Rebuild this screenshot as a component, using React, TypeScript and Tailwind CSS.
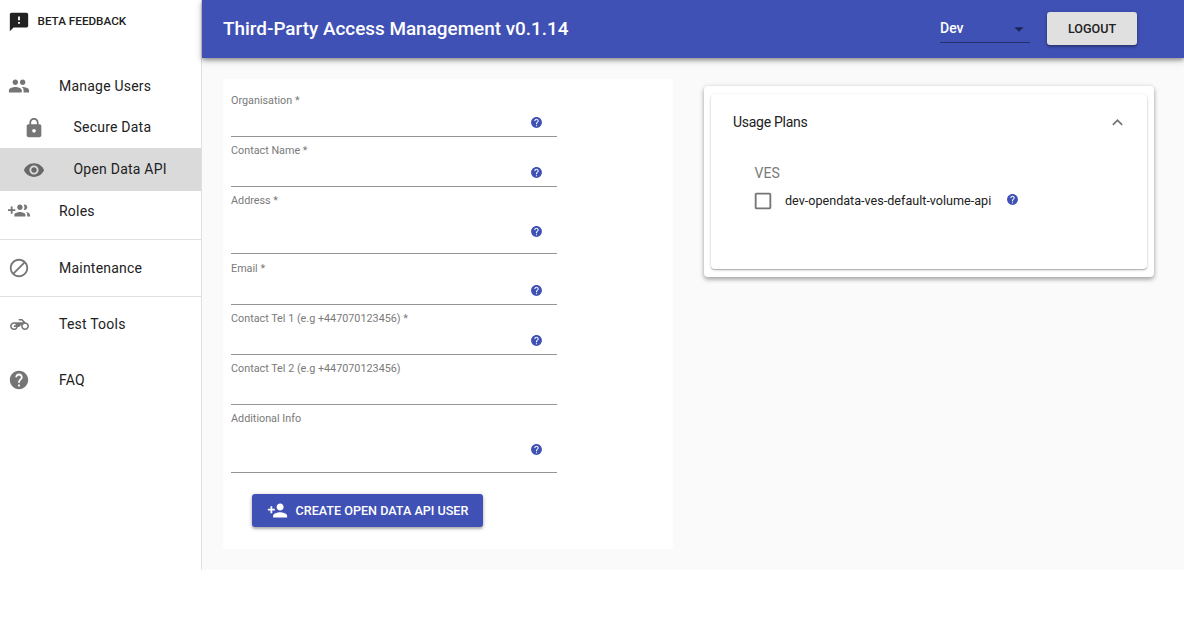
import type { ReactNode } from 'react';
import {
  MdArrowDropDown,
  MdCheckBoxOutlineBlank,
  MdExpandLess,
  MdHelp,
  MdLock,
  MdPeople,
  MdSmsFailed,
  MdVisibility,
} from 'react-icons/md';

function Svg({ d, className }: { d: string; className: string }) {
  return (
    <svg viewBox="0 0 24 24" fill="currentColor" className={className}>
      <path d={d} />
    </svg>
  );
}

const GROUP_ADD =
  'M8 10H5V7H3v3H0v2h3v3h2v-3h3v-2zm10 1c1.66 0 2.99-1.34 2.99-3S19.66 5 18 5c-.32 0-.63.05-.91.14.57.81.9 1.79.9 2.86s-.34 2.04-.9 2.86c.28.09.59.14.91.14zm-5 0c1.66 0 2.99-1.34 2.99-3S14.66 5 13 5c-1.66 0-3 1.34-3 3s1.34 3 3 3zm6.62 2.16c.83.73 1.38 1.66 1.38 2.84v2h3v-2c0-1.54-2.37-2.49-4.38-2.84zM13 13c-2 0-6 1-6 3v2h12v-2c0-2-4-3-6-3z';
const DO_NOT_DISTURB =
  'M12 2C6.5 2 2 6.5 2 12s4.5 10 10 10 10-4.5 10-10S17.5 2 12 2zM4 12c0-4.4 3.6-8 8-8 1.8 0 3.5.6 4.9 1.7L5.7 16.9C4.6 15.5 4 13.8 4 12zm8 8c-1.8 0-3.5-.6-4.9-1.7L18.3 7.1C19.4 8.5 20 10.2 20 12c0 4.4-3.6 8-8 8z';
const MOTORCYCLE =
  'M19.44 9.03L15.41 5H11v2h3.59l2 2H5c-2.8 0-5 2.2-5 5s2.2 5 5 5c2.46 0 4.45-1.69 4.9-4h1.65l2.77-2.77c-.21.54-.32 1.14-.32 1.77 0 2.8 2.2 5 5 5s5-2.2 5-5c0-2.65-1.97-4.77-4.56-4.97zM7.82 15C7.4 16.15 6.28 17 5 17c-1.63 0-3-1.37-3-3s1.37-3 3-3c1.28 0 2.4.85 2.82 2H5v2h2.82zM19 17c-1.66 0-3-1.34-3-3s1.34-3 3-3 3 1.34 3 3-1.34 3-3 3z';
const PERSON_ADD =
  'M15 12c2.21 0 4-1.79 4-4s-1.79-4-4-4-4 1.79-4 4 1.79 4 4 4zm-9-2V7H4v3H1v2h3v3h2v-3h3v-2H6zm9 4c-2.67 0-8 1.34-8 4v2h16v-2c0-2.66-5.33-4-8-4z';

function NavItem({ icon, label, nested, selected }: { icon: ReactNode; label: string; nested?: boolean; selected?: boolean }) {
  return (
    <a
      className={`flex shrink-0 items-center text-[14px] tracking-[0.22px] text-[#212121] ${nested ? 'pl-[22.5px]' : 'pl-2'} ${selected ? 'h-[43px] bg-[#dadada]' : 'h-[42px]'}`}
    >
      <span className="flex w-[51px] items-center text-[#757575]">{icon}</span>
      {label}
    </a>
  );
}

function Sidebar() {
  return (
    <nav className="flex h-[570px] w-[202px] shrink-0 flex-col border-r border-[#e0e0e0] bg-white">
      <div className="mb-[22px] flex h-[43px] items-center gap-[7.5px] pl-2 text-[11.7px] font-medium text-[#212121]">
        <MdSmsFailed className="size-[22px]" />
        <span className="pt-px">BETA FEEDBACK</span>
      </div>
      <NavItem icon={<MdPeople className="size-[22px]" />} label="Manage Users" />
      <div className="-mt-px flex flex-col">
        <NavItem nested icon={<MdLock className="mt-px size-[22px]" />} label="Secure Data" />
        <NavItem nested selected icon={<MdVisibility className="size-[22px] text-[#686868]" />} label="Open Data API" />
      </div>
      <div className="-mt-px">
        <NavItem icon={<Svg d={GROUP_ADD} className="size-[22px]" />} label="Roles" />
      </div>
      <div className="my-[7px] h-px shrink-0 bg-[#e0e0e0]" />
      <NavItem icon={<Svg d={DO_NOT_DISTURB} className="size-[22px]" />} label="Maintenance" />
      <div className="mt-[7px] mb-[6px] h-px shrink-0 bg-[#e0e0e0]" />
      <NavItem icon={<Svg d={MOTORCYCLE} className="ml-[1.5px] size-[19px]" />} label="Test Tools" />
      <div className="h-[14px] shrink-0" />
      <NavItem icon={<MdHelp className="size-[22px]" />} label="FAQ" />
    </nav>
  );
}

function Field({ label, height, help }: { label: string; height: string; help?: string }) {
  return (
    <div className={`flex w-[326px] justify-between border-b border-[#949494] ${height}`}>
      <label className="pt-[7px] text-[10.8px] leading-[14px] text-[#7a7a7a]">{label}</label>
      {help && <MdHelp className={`mr-[14px] size-[13px] text-[#3f51b5] ${help}`} />}
    </div>
  );
}

function UserForm() {
  return (
    <form className="h-[470px] w-[450px] rounded-[3px] bg-white pt-2 pl-2">
      <Field label="Organisation *" height="h-[50px]" help="mt-[29px]" />
      <Field label="Contact Name *" height="h-[50px]" help="mt-[29px]" />
      <Field label="Address *" height="h-[67px]" help="mt-[37.5px]" />
      <div className="flex h-[51px] flex-col justify-end">
        <Field label="Email *" height="h-[50px]" help="mt-[29px]" />
      </div>
      <Field label="Contact Tel 1 (e.g +447070123456) *" height="h-[50px]" help="mt-[29px]" />
      <Field label="Contact Tel 2 (e.g +447070123456)" height="h-[50px]" />
      <Field label="Additional Info" height="h-[68px]" help="mt-[37.5px]" />
      <button
        type="button"
        className="mt-[21px] ml-[21px] flex h-[33px] w-[231px] items-center gap-[7.5px] rounded-[3px] bg-[#3f51b5] pl-[15px] text-[12.6px] font-medium text-white shadow-[0_1px_4px_rgba(0,0,0,0.25),0_2px_2px_rgba(0,0,0,0.18)]"
      >
        <Svg d={PERSON_ADD} className="size-[21px]" />
        <span className="pt-px">CREATE OPEN DATA API USER</span>
      </button>
    </form>
  );
}

function UsagePlans() {
  return (
    <section className="mt-[7px] h-[191px] w-[450px] rounded-[4px] bg-white p-[7px] pt-2 shadow-[0_1px_5px_rgba(0,0,0,0.22),0_3px_4px_rgba(0,0,0,0.2)]">
      <div className="h-[175px] w-[436px] rounded-[4px] bg-white pl-[22px] shadow-[0_1px_3px_rgba(0,0,0,0.2),0_1px_1px_rgba(0,0,0,0.2)]">
        <div className="flex h-14 items-center justify-between pr-[19px] text-[14px] tracking-[-0.27px] text-[#212121]">
          Usage Plans
          <MdExpandLess className="size-[21px] text-[#757575]" />
        </div>
        <div className="pt-[14px] pl-[21.5px]">
          <div className="text-[14px] leading-[18px] tracking-[0.1px] text-[#7a7a7a]">VES</div>
          <div className="mt-2 flex h-[22px] items-center text-[12.6px] text-[#212121]">
            <MdCheckBoxOutlineBlank className="-ml-[2.5px] size-[22px] text-[#757575]" />
            <span className="ml-[11px]">dev-opendata-ves-default-volume-api</span>
            <MdHelp className="mb-[3px] ml-[15px] size-[13px] text-[#3f51b5]" />
          </div>
        </div>
      </div>
    </section>
  );
}

export default function App() {
  return (
    <div className="flex h-[643px] w-[1184px] overflow-hidden bg-white font-['Roboto',sans-serif]">
      <Sidebar />
      <div className="flex h-[570px] flex-1 flex-col bg-[#fafafa]">
        <header className="flex h-[58px] shrink-0 items-center bg-[#3f51b5] pr-[47px] pb-px pl-[21px] shadow-[0_2px_4px_rgba(0,0,0,0.35),0_3px_8px_rgba(0,0,0,0.15)]">
          <h1 className="flex-1 pt-[2px] text-[18.9px] font-medium text-white">Third-Party Access Management v0.1.14</h1>
          <div className="mr-[17px] flex h-[29px] w-[90px] items-center justify-between border-b border-[#252f69] text-[14px] font-medium text-white">
            Dev
            <MdArrowDropDown className="mt-px size-[22px] text-[#1d2554]" />
          </div>
          <button
            type="button"
            className="h-[33px] w-[90px] rounded-[3px] bg-[#e0e0e0] pt-px text-[12.6px] font-medium text-[#212121] shadow-[0_1px_4px_rgba(0,0,0,0.25),0_2px_2px_rgba(0,0,0,0.18)]"
          >
            LOGOUT
          </button>
        </header>
        <main className="flex items-start gap-[31px] pt-[21px] pl-[21px]">
          <UserForm />
          <UsagePlans />
        </main>
      </div>
    </div>
  );
}
